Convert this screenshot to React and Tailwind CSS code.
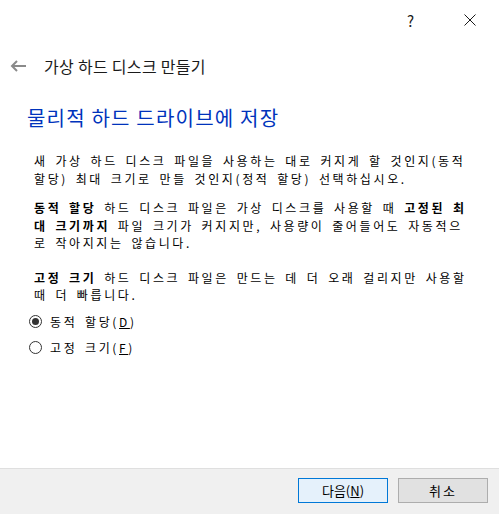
const body = '"Noto Sans CJK KR", "Liberation Sans", sans-serif'

function Radio({ checked, children }) {
  return (
    <div className="flex items-center h-[20px]">
      <span className="w-[13px] h-[13px] rounded-full border border-[#333333] bg-white flex items-center justify-center">
        {checked && <span className="w-[7px] h-[7px] rounded-full bg-[#333333]" />}
      </span>
      <span className="ml-[8px]">{children}</span>
    </div>
  )
}

export default function App() {
  return (
    <div
      className="w-[499px] h-[514px] flex flex-col bg-white text-black overflow-hidden"
      style={{ fontFamily: body }}
    >
      {/* caption buttons */}
      <div className="h-[40px] flex items-center justify-end pr-[23px] text-[#1a1a1a]">
        <span className="text-[15px] leading-none">?</span>
        <svg className="ml-[50px]" width="12" height="12" viewBox="0 0 12 12" stroke="#1a1a1a" strokeWidth="1">
          <path d="M0.5 0.5 L11.5 11.5 M11.5 0.5 L0.5 11.5" />
        </svg>
      </div>

      {/* wizard title */}
      <div className="mt-[14px] h-[24px] flex items-center pl-[10px]">
        <svg width="16" height="12" viewBox="0 0 16 12" fill="none" stroke="#8a8a8a" strokeWidth="2">
          <path d="M16 6 H2 M7 1 L2 6 L7 11" />
        </svg>
        <span className="ml-[18px] text-[16px] tracking-[0.3px] text-[#1a1a1a]">가상 하드 디스크 만들기</span>
      </div>

      {/* heading */}
      <div className="mt-[27px] pl-[27px] h-[26px] flex items-center text-[20px] text-[#0033bc] tracking-[1.2px]">
        물리적 하드 드라이브에 저장
      </div>

      {/* body */}
      <div className="pl-[34px] text-[12px] leading-[17.5px] tracking-[2.6px] [word-spacing:2.5px] whitespace-nowrap">
        <p className="mt-[21px]">
          새 가상 하드 디스크 파일을 사용하는 대로 커지게 할 것인지(동적<br />
          할당) 최대 크기로 만들 것인지(정적 할당) 선택하십시오.
        </p>
        <p className="mt-[12px]">
          <b>동적 할당</b> 하드 디스크 파일은 가상 디스크를 사용할 때 <b>고정된 최</b><br />
          <b>대 크기까지</b> 파일 크기가 커지지만, 사용량이 줄어들어도 자동적으<br />
          로 작아지지는 않습니다.
        </p>
        <p className="mt-[17px]">
          <b>고정 크기</b> 하드 디스크 파일은 만드는 데 더 오래 걸리지만 사용할<br />
          때 더 빠릅니다.
        </p>
      </div>

      <div className="pl-[29px] mt-[8px] flex flex-col gap-[6px] text-[12px] tracking-[2.6px] [word-spacing:2.5px]">
        <Radio checked>동적 할당(<u>D</u>)</Radio>
        <Radio>고정 크기(<u>F</u>)</Radio>
      </div>

      {/* footer */}
      <div className="mt-auto h-[46px] border-t border-[#dfdfdf] bg-[#f0f0f0] flex items-start justify-end gap-[10px] pt-[9px] pr-[11px]">
        <button className="w-[90px] h-[25px] border border-[#0078d7] bg-[#e5f1fb] text-[13px] text-black flex items-center justify-center">
          다음(<u>N</u>)
        </button>
        <button className="w-[90px] h-[25px] border border-[#adadad] bg-[#e1e1e1] text-[13px] text-black flex items-center justify-center tracking-[2px]">
          취소
        </button>
      </div>
    </div>
  )
}
